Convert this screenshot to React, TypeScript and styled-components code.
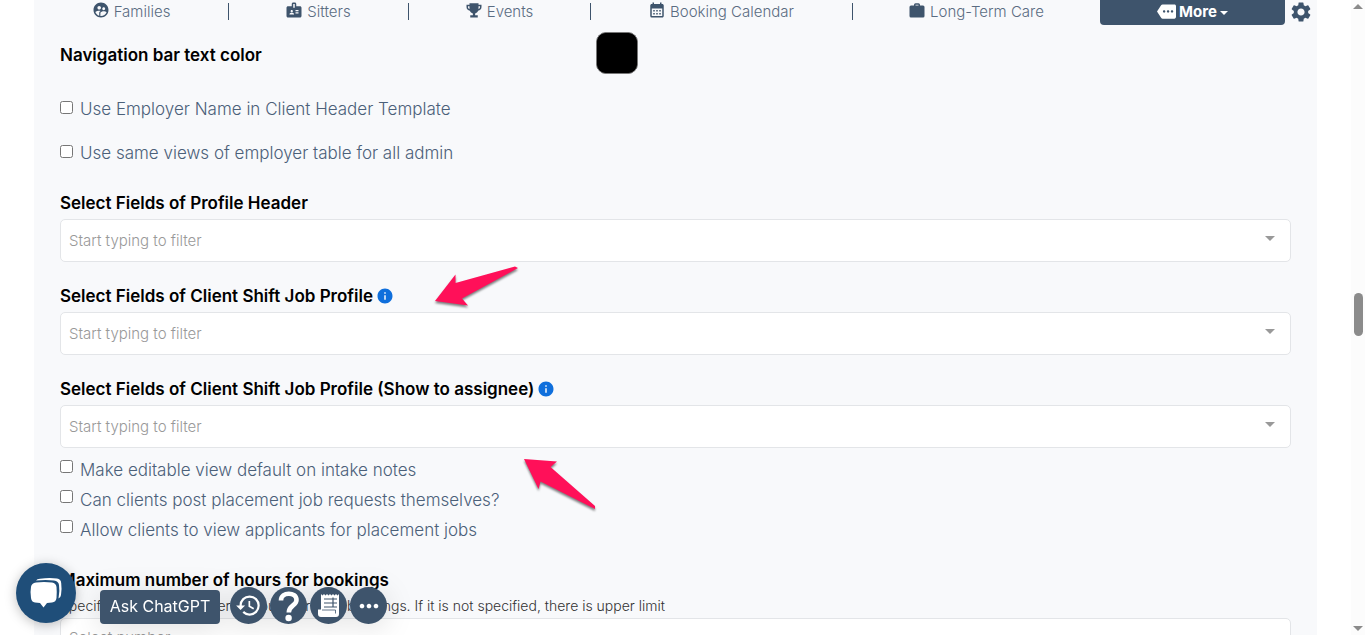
import React, { useId } from 'react';
import styled, { createGlobalStyle } from 'styled-components';
import {
  MdBadge,
  MdCalendarMonth,
  MdHistory,
  MdInfo,
  MdMore,
  MdMoreHoriz,
  MdSettings,
  MdSupervisedUserCircle,
} from 'react-icons/md';

const slate = '#3e546c';

const GlobalStyle = createGlobalStyle`
  *, *::before, *::after { box-sizing: border-box; }
  html, body, #root { height: 100%; }
  body {
    margin: 0;
    overflow: hidden;
    background: #fff;
    color: #000;
    font-family: Inter, 'Liberation Sans', sans-serif;
    font-size: 17px;
  }
`;

const Page = styled.div`
  display: flex;
  height: 100%;
  overflow: hidden;
`;

const Panel = styled.main`
  flex: 1;
  min-width: 0;
  margin: 0 34px;
  background: #f8f9fb;
`;

const Nav = styled.nav`
  display: flex;
  align-items: flex-start;
  height: 25px;
`;

const NavCell = styled.div<{ $share: number }>`
  flex: ${(p) => p.$share} 1 0;
  min-width: 0;
  display: flex;
  justify-content: center;
  height: 20px;
  padding-top: 1px;

  & + & {
    background: linear-gradient(${slate}, ${slate}) no-repeat left 3px / 1px 17px;
  }
`;

const NavLink = styled.a`
  display: flex;
  align-items: flex-start;
  gap: 4px;
  color: #5a6c82;
  font-size: 15px;
  font-weight: 300;
  line-height: 22px;
  text-decoration: none;
  white-space: nowrap;

  svg {
    width: 18px;
    height: 18px;
    color: ${slate};
  }
`;

const MoreButton = styled.button`
  flex: 185 1 0;
  display: flex;
  align-items: center;
  justify-content: center;
  gap: 3px;
  height: 25px;
  padding: 0 0 3px;
  border: 0;
  border-radius: 0 0 4px 4px;
  background: ${slate};
  color: #fff;
  font: 700 15px Inter, sans-serif;
`;

const Caret = styled.span<{ $color: string }>`
  margin-bottom: 4px;
  border: 5px solid transparent;
  border-top-color: ${(p) => p.$color};
  border-bottom: 0;
`;

const SmallCaret = styled(Caret)`
  border-width: 4px 4px 0;
  margin: 4px 0 0;
`;

const GearButton = styled.button`
  flex: none;
  width: 32px;
  height: 24px;
  padding: 0;
  border: 0;
  background: none;
  color: ${slate};

  svg {
    display: block;
    width: 24px;
    height: 24px;
    margin-left: 4px;
  }
`;

const Form = styled.form`
  padding: 0 26px;
`;

const ColorRow = styled.div`
  display: grid;
  grid-template-columns: 536px 1fr;
  align-items: center;
  height: 56px;
`;

const Label = styled.label`
  font-size: 17px;
  font-weight: 600;
  line-height: 20px;
`;

const ColorLabel = styled(Label)`
  padding-top: 4px;
`;

const Swatch = styled.input`
  width: 42px;
  height: 42px;
  padding: 0;
  border: 1px solid #777;
  border-radius: 10px;
  background: #000;
  appearance: none;

  &::-webkit-color-swatch-wrapper { padding: 0; }
  &::-webkit-color-swatch { border: 0; border-radius: 9px; }
`;

const SpacedChecks = styled.div`
  display: grid;
  gap: 22px;
  padding: 17px 0 28px;
`;

const TightChecks = styled.div`
  display: grid;
  gap: 8px;
  padding: 11px 0 28px;
`;

const CheckRow = styled.label<{ $raised?: boolean }>`
  display: flex;
  align-items: flex-start;
  gap: 7px;
  color: #4b6079;
  font-size: 17px;
  font-weight: 300;
  line-height: 22px;

  input {
    width: 13px;
    height: 13px;
    margin: ${(p) => (p.$raised ? 1 : 3)}px 0 0;
  }
`;

const Fields = styled.div`
  display: grid;
  gap: 23px;
`;

const FieldHead = styled.div`
  display: flex;
  align-items: center;
  gap: 3px;
  height: 22px;
  margin-bottom: 5px;

  svg {
    width: 18px;
    height: 18px;
    color: #0f6fdc;
  }
`;

const Combo = styled.div`
  display: flex;
  align-items: center;
  height: 43px;
  padding: 0 15px 0 8px;
  border: 1px solid #e3e5e8;
  border-radius: 5px;
  background: #fff;
`;

const NumberBox = styled(Combo)`
  padding-bottom: 4px;
`;

const ComboInput = styled.input`
  flex: 1;
  min-width: 0;
  padding: 0;
  border: 0;
  outline: 0;
  background: none;
  font: 300 15px/20px Inter, sans-serif;

  &::placeholder { color: #999; opacity: 1; }
`;

const Hint = styled.p`
  margin: 0 0 2px;
  color: #333;
  font-size: 14px;
  font-weight: 300;
  line-height: 20px;
`;

const ScrollTrack = styled.div`
  flex: none;
  width: 14px;
  height: 100%;
  display: flex;
  flex-direction: column;
  align-items: center;
  justify-content: space-between;
  padding: 4px 0;
  background: #fcfcfc;
`;

const ScrollArrow = styled.span<{ $down?: boolean }>`
  border: 5px solid transparent;
  border-width: ${(p) => (p.$down ? '5px 5px 0' : '0 5px 5px')};
  border-color: ${(p) => (p.$down ? '#8b8b8b transparent' : 'transparent transparent #8b8b8b')};
`;

const ScrollThumb = styled.span`
  width: 9px;
  height: 43px;
  margin-bottom: 6px;
  border-radius: 5px;
  background: #8b8b8b;
`;

const ChatButton = styled.button`
  position: fixed;
  left: 16px;
  bottom: 12px;
  width: 60px;
  height: 60px;
  padding: 0;
  border: 0;
  border-radius: 50%;
  background: #1f4e79;
  box-shadow: 0 2px 12px rgba(0, 0, 0, 0.25);

  svg { display: block; }
`;

const Dock = styled.div`
  position: fixed;
  left: 100px;
  bottom: 11px;
  display: flex;
  align-items: flex-end;
  filter: drop-shadow(0 4px 14px rgba(0, 0, 0, 0.12));
`;

const AskButton = styled.button`
  width: 120px;
  height: 34px;
  margin-right: 10px;
  padding: 0 0 2px;
  border: 0;
  border-radius: 4px;
  background: ${slate};
  color: #fff;
  font: 400 16px Inter, sans-serif;
  white-space: nowrap;
`;

const RoundButton = styled.button`
  display: grid;
  place-items: center;
  width: 37px;
  height: 37px;
  margin-right: 3px;
  padding: 0;
  border: 0;
  border-radius: 50%;
  background: ${slate};
  color: #fff;
`;

const Pointer = styled.svg<{ $x: number; $y: number }>`
  position: absolute;
  left: ${(p) => p.$x}px;
  top: ${(p) => p.$y}px;
  pointer-events: none;
  fill: #ff1059;
  filter: drop-shadow(0 2px 1px rgba(0, 0, 0, 0.5));
`;

const Trophy = () => (
  <svg viewBox="0 0 24 24" fill="currentColor" aria-hidden="true">
    <path d="M6 3h12v2h4v3c0 3-2 4.500-4.500 5-.7 1.800-2.200 3-4 3.500V19H17v3H7v-3h3.500v-2.500C8.700 16 7.200 14.800 6.500 13 4 12.500 2 11 2 8V5h4V3M4 7v1c0 1.300.7 2.200 2 2.700V7H4m16 0h-2v3.700c1.300-.5 2-1.400 2-2.700V7z" />
  </svg>
);

const Briefcase = () => (
  <svg viewBox="0 0 24 24" fill="currentColor" aria-hidden="true">
    <path d="M10 3h4a2 2 0 0 1 2 2v1h4a2 2 0 0 1 2 2v12a2 2 0 0 1-2 2H4a2 2 0 0 1-2-2V8a2 2 0 0 1 2-2h4V5a2 2 0 0 1 2-2m4 3V5h-4v1h4z" />
  </svg>
);

const Question = () => (
  <svg width="37" height="37" viewBox="0 0 37 37" fill="none" aria-hidden="true">
    <path d="M11 13.500C11 4.500 26.500 4.500 26.500 13C26.500 18.500 18.800 18.500 18.800 25.500" stroke="#fff" strokeWidth="4.600" />
    <circle cx="18.600" cy="31" r="3.200" fill="#fff" />
  </svg>
);

const Receipt = () => (
  <svg width="37" height="37" viewBox="0 0 37 37" aria-hidden="true">
    <path
      fill="#fff"
      d="M11 7l1.500 1.500L14 7l1.500 1.500L17 7l1.500 1.500L20 7l1.500 1.500L23 7l1.500 1.500L26 7l1.500 1.500L29 7v20q0 3-3 3H11q-3 0-3-3v-4.500h3z"
    />
    <path d="M14 12H27M14 16H27M23 10.500V20.500M14 20H27" fill="none" stroke={slate} strokeWidth="1.200" />
    <path d="M12 23H25.500V26.500" fill="none" stroke={slate} strokeWidth="0.800" />
  </svg>
);

const navItems = [
  { text: 'Families', icon: <MdSupervisedUserCircle />, share: 194 },
  { text: 'Sitters', icon: <MdBadge />, share: 180 },
  { text: 'Events', icon: <Trophy />, share: 182 },
  { text: 'Booking Calendar', icon: <MdCalendarMonth />, share: 262 },
  { text: 'Long-Term Care', icon: <Briefcase />, share: 248 },
];

function CheckOption({ text, raised }: { text: string; raised?: boolean }) {
  return (
    <CheckRow $raised={raised}>
      <input type="checkbox" />
      {text}
    </CheckRow>
  );
}

function FilterField({ label, info }: { label: string; info?: boolean }) {
  const id = useId();
  return (
    <div>
      <FieldHead>
        <Label htmlFor={id}>{label}</Label>
        {info && <MdInfo />}
      </FieldHead>
      <Combo>
        <ComboInput id={id} placeholder="Start typing to filter" />
        <Caret $color="#999" />
      </Combo>
    </div>
  );
}

export default function App() {
  return (
    <Page>
      <GlobalStyle />
      <Panel>
        <Nav>
          {navItems.map((item) => (
            <NavCell key={item.text} $share={item.share}>
              <NavLink href="#">
                {item.icon}
                {item.text}
              </NavLink>
            </NavCell>
          ))}
          <MoreButton type="button">
            <MdMore size={19} />
            More
            <SmallCaret $color="#fff" />
          </MoreButton>
          <GearButton type="button" aria-label="Settings">
            <MdSettings />
          </GearButton>
        </Nav>

        <Form>
          <ColorRow>
            <ColorLabel htmlFor="nav-color">Navigation bar text color</ColorLabel>
            <Swatch id="nav-color" type="color" defaultValue="#000000" />
          </ColorRow>

          <SpacedChecks>
            <CheckOption text="Use Employer Name in Client Header Template" />
            <CheckOption text="Use same views of employer table for all admin" />
          </SpacedChecks>

          <Fields>
            <FilterField label="Select Fields of Profile Header" />
            <FilterField label="Select Fields of Client Shift Job Profile" info />
            <FilterField label="Select Fields of Client Shift Job Profile (Show to assignee)" info />
          </Fields>

          <TightChecks>
            <CheckOption raised text="Make editable view default on intake notes" />
            <CheckOption raised text="Can clients post placement job requests themselves?" />
            <CheckOption raised text="Allow clients to view applicants for placement jobs" />
          </TightChecks>

          <FieldHead>
            <Label htmlFor="max-hours">Maximum number of hours for bookings</Label>
          </FieldHead>
          <Hint>Specify maximum number of hours for their bookings. If it is not specified, there is upper limit</Hint>
          <NumberBox>
            <ComboInput id="max-hours" placeholder="Select number" />
          </NumberBox>
        </Form>
      </Panel>

      <ScrollTrack aria-hidden="true">
        <ScrollArrow />
        <ScrollThumb />
        <ScrollArrow $down />
      </ScrollTrack>

      <Pointer $x={430} $y={262} width="92" height="50" aria-hidden="true">
        <path d="M5 39 25.500 12.500V21L85 4.500 88 6 32 36.500 38 43.500Z" />
      </Pointer>
      <Pointer $x={520} $y={455} width="82" height="60" aria-hidden="true">
        <path d="M4 4 37 6.500 30.500 12 75 51 75 54 20.500 26.500 18.500 34Z" />
      </Pointer>

      <ChatButton type="button" aria-label="Chat">
        <svg width="60" height="60" viewBox="0 0 60 60" fill="#fff" aria-hidden="true">
          <path d="M20 19.500Q28 18.500 36 19.500 40 20 40.500 24 41 29 40.500 35 40 39 36 39.500L31 40 27.500 44.500 24 40 19 39.500Q15.500 39 15 35 14 29 15 24 15.500 20 20 19.500Z" />
          <path d="M20 17.500Q21 16 24 15.700 33 14.500 41 15.500 45 16 45.200 20 46 26 45 32 44.500 35 42.500 35.500 44 28 43 22 42.500 18 38 17.500 30 16.500 20 17.500Z" />
        </svg>
      </ChatButton>

      <Dock>
        <AskButton type="button">Ask ChatGPT</AskButton>
        <RoundButton type="button" aria-label="History"><MdHistory size={27} /></RoundButton>
        <RoundButton type="button" aria-label="Help"><Question /></RoundButton>
        <RoundButton type="button" aria-label="Receipts"><Receipt /></RoundButton>
        <RoundButton type="button" aria-label="More actions"><MdMoreHoriz size={28} /></RoundButton>
      </Dock>
    </Page>
  );
}
